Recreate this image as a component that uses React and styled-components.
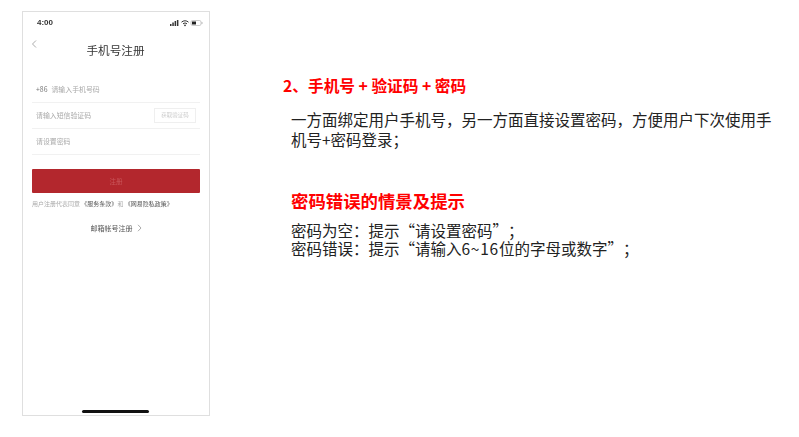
import React from "react";
import styled, { createGlobalStyle } from "styled-components";

const Global = createGlobalStyle`
  html, body { margin: 0; padding: 0; background: #fff; }
  body { font-family: "Noto Sans CJK SC", "Noto Sans", sans-serif; text-spacing-trim: space-all; font-kerning: none; }
`;
const Page = styled.div`
  width: 799px; height: 437px; overflow: hidden; display: flex; align-items: flex-start;
  padding: 11px 0 0 22px; box-sizing: border-box; background: #fff;
`;
const Phone = styled.div`
  width: 188px; height: 405px; box-sizing: border-box; border: 1px solid #dfdfdf;
  display: flex; flex-direction: column; padding: 0 9px; position: relative; color: #333;
`;
const Soft = styled.div`
  filter: blur(0.4px); display: flex; flex-direction: column; flex: 1;
`;
const Status = styled.div`
  display: flex; justify-content: space-between; align-items: center; height: 12px; margin: 5px -3px 0 0; padding: 0 0 0 5px;
  font-size: 8px; line-height: 12px; font-weight: 700; color: #333; font-family: "Liberation Sans", sans-serif;
`;
const Back = styled.svg`
  width: 7px; height: 8px; margin: 11px 0 0 -1px; display: block;
`;
const Title = styled.div`
  text-align: center; font-size: 11.6px; line-height: 14px; color: #333; margin-top: -5px; margin-right: 1px;
`;
const Field = styled.div`
  height: 26px; display: flex; align-items: center; justify-content: space-between; border-bottom: 1px solid #f1f1f1;
  box-sizing: border-box; font-size: 6.9px; line-height: 10px; color: #aaa; padding: 0 4px 1px;
`;
const Fields = styled.div`
  margin-top: 20px; display: flex; flex-direction: column;
`;
const Prefix = styled.span` color: #777; margin-right: 4px; `;
const CodeBtn = styled.div`
  width: 42px; height: 15px; border: 1px solid #efefef; box-sizing: border-box; font-size: 5.5px; color: #ccc;
  display: flex; align-items: center; justify-content: center;
`;
const Submit = styled.div`
  height: 24px; margin-top: 14px; background: #b3272d; border-radius: 1px; color: #c9565a; font-size: 6.5px;
  display: flex; align-items: center; justify-content: center;
`;
const Terms = styled.div`
  margin-top: 7px; font-size: 6px; color: #aaa; white-space: nowrap; line-height: 8px;
  b { font-weight: 400; color: #555; }
`;
const Alt = styled.div`
  margin-top: 15px; display: flex; align-items: center; justify-content: center; gap: 4px; font-size: 7px; color: #555; line-height: 10px;
`;
const Home = styled.div`
  position: absolute; left: 59px; bottom: 2px; width: 67px; height: 3px; border-radius: 2px; background: #111;
`;
const Notes = styled.div`
  margin-left: 73px; width: 500px; display: flex; flex-direction: column;
`;
const Heading = styled.div`
  color: #f00; font-weight: 700; font-size: ${p => p.$size}px; line-height: 20px; white-space: pre;
  margin-top: ${p => p.$top}px; margin-left: ${p => p.$left}px;
`;
const Para = styled.p`
  margin: ${p => p.$top}px 0 0 8px; color: #222; font-size: 15.5px; line-height: ${p => p.$lh}px; white-space: pre;
`;
const Digits = styled.span` letter-spacing: 0.75px; `;

export default function App() {
  return (
    <Page lang="zh-CN">
      <Global />
      <Phone>
        <Soft>
          <Status>
            <span>4:00</span>
            <svg width="33" height="8" viewBox="0 0 33 8">
              <g fill="#333">
                <rect x="0" y="5" width="1.5" height="2" /><rect x="2.3" y="3.5" width="1.5" height="3.5" />
                <rect x="4.6" y="2" width="1.5" height="5" /><rect x="6.9" y="1" width="1.5" height="6" />
              </g>
              <path d="M11.5 3.2a5 5 0 0 1 7 0M13 4.8a3 3 0 0 1 4 0" stroke="#333" fill="none" />
              <circle cx="15" cy="6.3" r="0.9" fill="#333" />
              <rect x="21" y="1.5" width="10" height="5" rx="1.5" fill="none" stroke="#aaa" strokeWidth="0.6" />
              <rect x="22" y="2.5" width="4" height="3" fill="#222" />
              <rect x="31.6" y="3" width="0.8" height="2" fill="#aaa" />
            </svg>
          </Status>
          <Back viewBox="0 0 7 8"><path d="M5 .5 1.5 4 5 7.5" fill="none" stroke="#888" strokeWidth="0.7" /></Back>
          <Title>手机号注册</Title>
          <Fields>
            <Field><span><Prefix>+86</Prefix>请输入手机号码</span></Field>
            <Field><span>请输入短信验证码</span><CodeBtn>获取验证码</CodeBtn></Field>
            <Field><span>请设置密码</span></Field>
          </Fields>
          <Submit>注册</Submit>
          <Terms>用户注册代表同意 <b>《服务条款》</b>和 <b>《网易隐私政策》</b></Terms>
          <Alt>
            <span>邮箱帐号注册</span>
            <svg width="5" height="8" viewBox="0 0 5 8"><path d="M1 .8 4 4 1 7.2" fill="none" stroke="#888" strokeWidth="0.7" /></svg>
          </Alt>
        </Soft>
        <Home />
      </Phone>
      <Notes>
        <Heading $size={15.7} $top={65} $left={0}>2、手机号 + 验证码 + 密码</Heading>
        <Para $top={13} $lh={20}>{"一方面绑定用户手机号，另一方面直接设置密码，方便用户下次使用手\n机号+密码登录；"}</Para>
        <Heading $size={17.4} $top={42} $left={8}>密码错误的情景及提示</Heading>
        <Para $top={10} $lh={18}>{"密码为空：提示“请设置密码”；\n密码错误：提示“请输入"}<Digits>6~16</Digits>{"位的字母或数字”；"}</Para>
      </Notes>
    </Page>
  );
}
